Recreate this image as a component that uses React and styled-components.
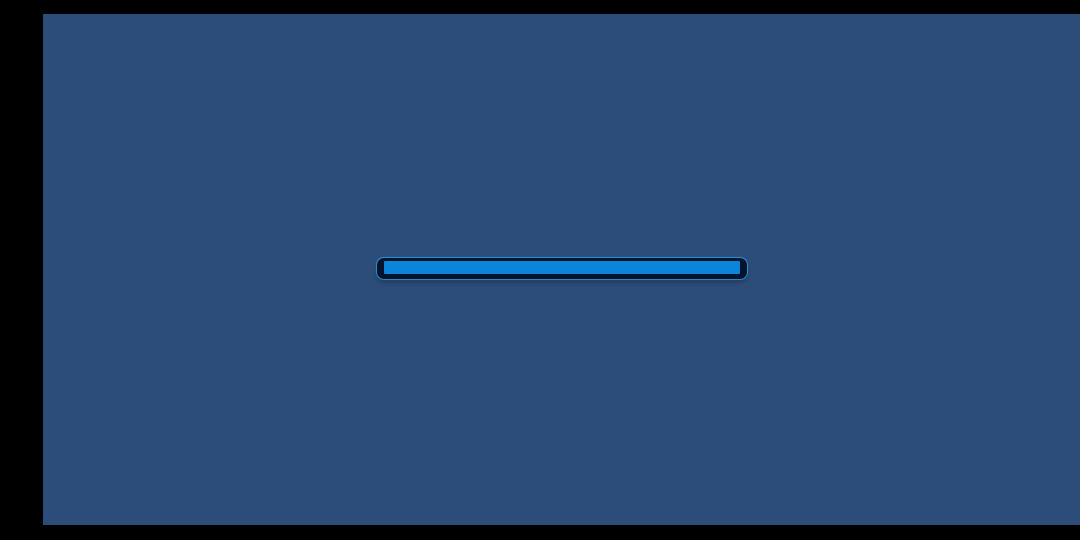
import React from "react";
import styled, { createGlobalStyle } from "styled-components";

const Global = createGlobalStyle`
  html, body { margin: 0; padding: 0; background: #000; }
  body { font-family: "Liberation Sans", Arial, sans-serif; }
`;

const Page = styled.div`
  width: 1080px;
  height: 540px;
  box-sizing: border-box;
  padding: 14px 0 15px 43px;
  background: #000;
  display: flex;
`;

const Panel = styled.div`
  flex: 1;
  background: #2c4c7a;
  display: flex;
  align-items: center;
  justify-content: center;
`;

const Track = styled.div`
  width: 370px;
  height: 21px;
  box-sizing: border-box;
  padding: 3px 7px 5px;
  border-radius: 7px;
  background: #04142e;
  box-shadow: 0 0 0 1px rgba(50, 170, 235, 0.6), 0 0 2px 1px rgba(40, 150, 220, 0.35),
    0 3px 4px rgba(0, 0, 0, 0.3);
  display: flex;
  margin-top: -2px;
`;

const Fill = styled.div`
  background: #0b85d9;
  border-radius: 1px;
`;

export default function App() {
  return (
    <>
      <Global />
      <Page>
        <Panel>
          <Track>
            <Fill style={{ width: "100%" }} />
          </Track>
        </Panel>
      </Page>
    </>
  );
}
